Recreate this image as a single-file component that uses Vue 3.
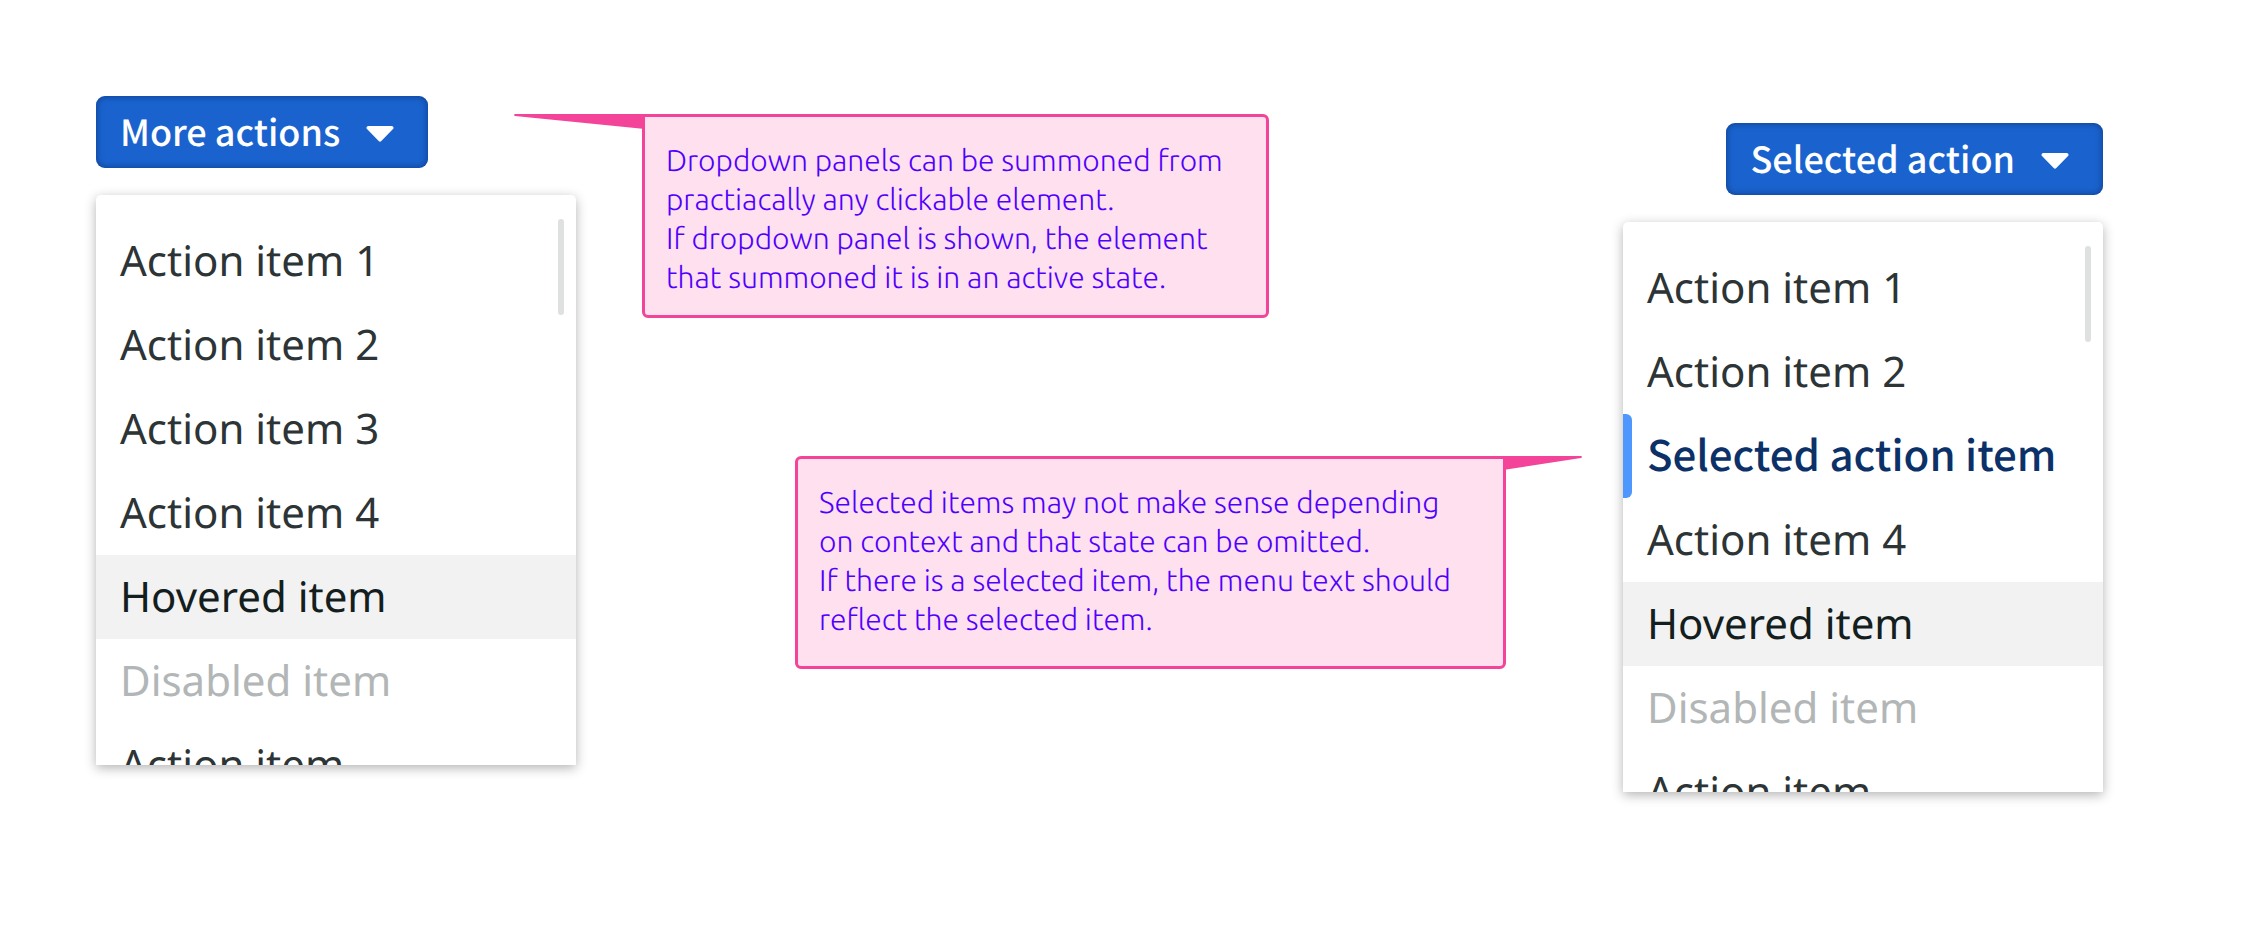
<script setup>
const items = [
  { label: 'Action item 1' },
  { label: 'Action item 2' },
  { label: 'Action item 3' },
  { label: 'Action item 4' },
  { label: 'Hovered item', state: 'hovered' },
  { label: 'Disabled item', state: 'disabled' },
  { label: 'Action item' },
]

const dropdowns = [
  { id: 'more', label: 'More actions', side: 'start', items },
  {
    id: 'selected',
    label: 'Selected action',
    side: 'end',
    items: items.map((item, i) =>
      i === 2 ? { label: 'Selected action item', state: 'selected' } : item,
    ),
  },
]
</script>

<template>
  <main class="page">
    <section
      v-for="menu in dropdowns"
      :key="menu.id"
      class="dropdown"
      :class="menu.side"
    >
      <button
        :id="menu.id + '-trigger'"
        class="trigger"
        type="button"
        aria-haspopup="menu"
        aria-expanded="true"
        :aria-controls="menu.id + '-menu'"
      >
        <span>{{ menu.label }}</span>
        <svg class="caret" viewBox="0 0 28 22" aria-hidden="true">
          <path d="M2 6H26Q28.500 7 27 9L15.300 21Q14 22.400 12.700 21L1 9Q-.5 7 2 6Z" fill="currentColor" />
        </svg>
      </button>
      <div class="panel">
        <ul :id="menu.id + '-menu'" class="menu" role="menu" :aria-labelledby="menu.id + '-trigger'">
          <li v-for="item in menu.items" :key="item.label" role="none">
            <button
              class="item"
              :class="item.state"
              type="button"
              role="menuitem"
              :disabled="item.state === 'disabled'"
            >
              {{ item.label }}
            </button>
          </li>
        </ul>
        <span class="thumb"></span>
      </div>
    </section>

    <div class="notes">
      <aside class="note first">
        <svg class="tail" viewBox="0 0 128 15" preserveAspectRatio="none" aria-hidden="true">
          <path d="M128 0H1Q-1 1 1 2L128 15Z" fill="#f34499" />
        </svg>
        <p>Dropdown panels can be summoned from<br />practiacally any clickable element.</p>
        <p>If dropdown panel is shown, the element<br />that summoned it is in an active state.</p>
      </aside>
      <aside class="note second">
        <svg class="tail" viewBox="0 0 77 14" preserveAspectRatio="none" aria-hidden="true">
          <path d="M0 0H76Q78 1 76 2L0 14Z" fill="#f34499" />
        </svg>
        <p>Selected items may not make sense depending<br />on context and that state can be omitted.</p>
        <p>If there is a selected item, the menu text should<br />reflect the selected item.</p>
      </aside>
    </div>
  </main>
</template>

<style>
body {
  background: #fff;
}
</style>

<style scoped>
.page {
  display: flex;
  align-items: flex-start;
  padding: 96px 144px 96px 96px;
  font-family: "Noto Sans", sans-serif;
  text-rendering: geometricPrecision;
}

.dropdown {
  display: flex;
  flex: 0 0 480px;
  flex-direction: column;
  align-items: flex-start;
  gap: 27px;
}

.dropdown.end {
  order: 3;
  align-items: flex-end;
  padding-top: 27px;
}

.trigger {
  display: flex;
  align-items: center;
  gap: 26px;
  height: 72px;
  padding: 0 34px 2px 24px;
  border: 0;
  border-radius: 9px;
  background: #1a63ce;
  box-shadow: inset 0 0 6px 1px rgba(10, 45, 110, 0.6);
  color: #fff;
  font-family: "Noto Sans CJK JP", sans-serif;
  font-size: 36px;
  font-weight: 500;
  line-height: 70px;
  text-rendering: inherit;
  white-space: nowrap;
}

.caret {
  width: 28px;
  height: 22px;
}

.panel {
  position: relative;
  align-self: stretch;
  max-height: 570px;
  overflow: hidden;
  border-radius: 5px 5px 0 0;
  background: #fff;
  box-shadow: 0 3px 12px rgba(0, 0, 0, 0.3);
}

.menu {
  margin: 0;
  padding: 24px 0;
  list-style: none;
}

.item {
  display: block;
  position: relative;
  width: 100%;
  height: 84px;
  padding: 0 24px 1px;
  border: 0;
  background: none;
  color: #2d3436;
  font-family: inherit;
  font-size: 42px;
  line-height: 83px;
  text-align: left;
  text-rendering: inherit;
  white-space: nowrap;
}

.item.hovered {
  background: #f2f2f2;
  color: #141e1e;
}

.item.disabled {
  color: #b2b6b6;
}

.item.selected {
  padding-bottom: 4px;
  color: #0b3168;
  font-family: "Noto Sans CJK JP", sans-serif;
  font-weight: 500;
  line-height: 80px;
}

.item.selected::before {
  content: "";
  position: absolute;
  inset: 0 auto 0 0;
  width: 9px;
  border-radius: 0 6px 6px 0;
  background: #4d97ff;
}

.thumb {
  position: absolute;
  top: 24px;
  right: 12px;
  width: 6px;
  height: 96px;
  border-radius: 3px;
  background: #dfe1e1;
}

.notes {
  display: flex;
  flex: 1;
  order: 2;
  flex-direction: column;
  gap: 138px;
  padding: 18px 117px 0 66px;
}

.note {
  position: relative;
  box-sizing: border-box;
  padding: 24px 21px 18px;
  border: 3px solid #f34499;
  border-radius: 6px;
  background: #fee0ee;
  color: #5000ff;
  font-family: Ubuntu, Lato, sans-serif;
  font-size: 30px;
  font-weight: 300;
  line-height: 39px;
  white-space: nowrap;
}

.note p {
  margin: 0;
}

.note.first {
  align-self: flex-start;
  width: 627px;
  border-top-left-radius: 0;
}

.note.second {
  align-self: flex-end;
  width: 711px;
  padding-bottom: 27px;
  border-top-right-radius: 0;
}

.tail {
  position: absolute;
  top: -3px;
}

.first .tail {
  right: 100%;
  width: 131px;
  height: 15px;
}

.second .tail {
  left: 100%;
  width: 79px;
  height: 14px;
}
</style>
